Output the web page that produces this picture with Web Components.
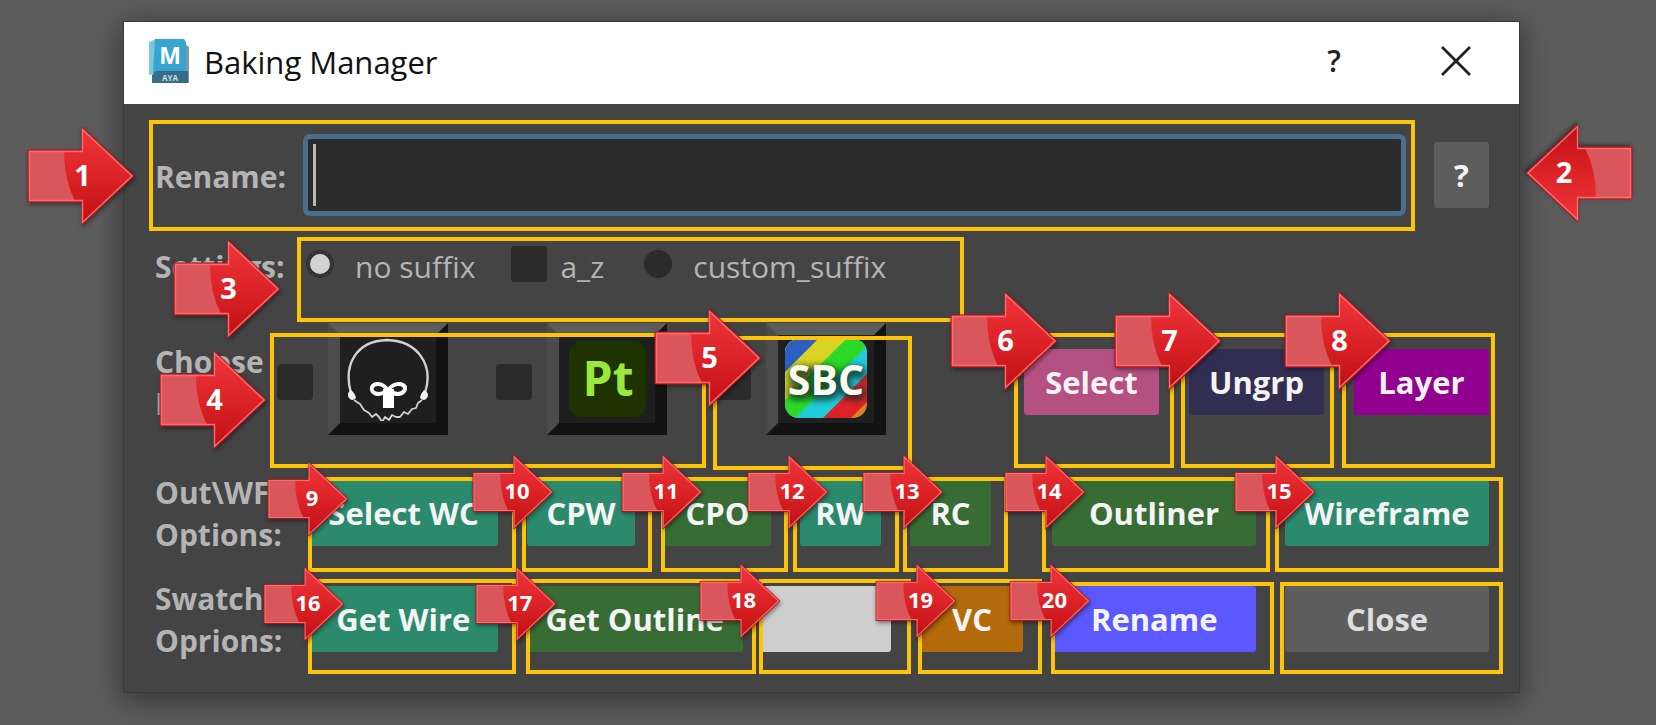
<!DOCTYPE html>
<html lang="en">
<head>
<meta charset="utf-8">
<title>Baking Manager</title>
<style>
  body { margin: 0; min-height: 100vh; background: #5c5c5c; font-family: "Open Sans", "Noto Sans", sans-serif; overflow-x: hidden; }
</style>
</head>
<body>
<baking-manager></baking-manager>

<script>
const define = (name, css, html, setup) => {
  const tpl = document.createElement('template');
  tpl.innerHTML = `<style>*{box-sizing:border-box}${css}</style>${html}`;
  customElements.define(name, class extends HTMLElement {
    connectedCallback() {
      if (this.shadowRoot) return;
      this.attachShadow({ mode: 'open' }).append(tpl.content.cloneNode(true));
      if (setup) setup(this, this.shadowRoot);
    }
  });
};

/* Red numbered arrow */
define('number-arrow', `
  :host { position: absolute; width: 106px; height: 98px; pointer-events: none; color: #fff; font-weight: 700; font-size: 29px; line-height: 96px; }
  :host([small]) { width: 80px; height: 74px; font-size: 22px; line-height: 71px; }
  svg { display: block; width: 100%; height: 100%; overflow: visible; filter: drop-shadow(1px 2px 2px rgba(0,0,0,.45)); }
  :host([back]) svg { transform: rotate(180deg); }
  span { position: absolute; inset: 0 0 0 3%; text-align: center; }
  :host([small]) span { left: 10%; }
  :host([back]) span { left: 0; right: 28%; }
`, `
  <svg viewBox="0 0 106 98" aria-hidden="true">
    <defs><linearGradient id="g" x1="0" y1="0" x2="0" y2="1"><stop offset="0" stop-color="#ee363b"/><stop offset=".5" stop-color="#dc2327"/><stop offset="1" stop-color="#bd0f12"/></linearGradient></defs>
    <path d="M0 23H54V0L106 49L54 98V75H0Z" fill="url(#g)" stroke="#a81c20" stroke-width="1"/>
    <path d="M1 24H36Q36 53 47 74H1Z" fill="#d9575b"/>
    <path d="M1.500 24.500H54.500V2.500L104 49L54.500 95.500V73.500H1.500Z" fill="none" stroke="#ff6a70" stroke-width="1.400"/>
  </svg><span><slot></slot></span>
`);

/* Content with a yellow frame around it and an optional arrow */
define('call-out', `
  :host { position: relative; display: flex; flex: none; }
  i { position: absolute; border: 4px solid #fcc40b; pointer-events: none; }
`, `<slot></slot><i hidden></i>`, (el, root) => {
  const frame = root.querySelector('i');
  const box = el.getAttribute('frame');
  if (box) { frame.hidden = false; frame.style.inset = box.split(' ').map(v => v + 'px').join(' '); } else frame.remove();
  if (el.hasAttribute('n')) {
    const arrow = document.createElement('number-arrow');
    const [x, y] = el.getAttribute('arrow').split(' ');
    arrow.style.left = x + 'px'; arrow.style.top = y + 'px';
    if (el.hasAttribute('small')) arrow.setAttribute('small', '');
    if (el.hasAttribute('back')) arrow.setAttribute('back', '');
    arrow.textContent = el.getAttribute('n');
    root.append(arrow);
  }
});

define('tool-button', `
  :host { display: flex; flex: 1; min-width: 0; }
  button { flex: 1; min-width: 0; height: 66px; padding: 0; border: 0; border-radius: 3px; background: var(--fill, #5d5d5d); color: var(--ink, #f4f4f4); font: 700 31px/42px "Open Sans", "Noto Sans", sans-serif; white-space: nowrap; }
`, `<button type="button"><slot></slot></button>`);

define('row-label', `
  :host { display: block; flex: none; width: 154px; padding-top: 2px; color: #b4b4b4; font-size: 30px; line-height: 42px; font-weight: 700; white-space: nowrap; }
`, `<slot></slot>`);

define('option-choice', `
  :host { display: flex; color: #b4b4b4; font-size: 30px; line-height: 42px; }
  label { display: flex; align-items: flex-start; white-space: nowrap; }
  input { appearance: none; margin: 0; background: #2b2b2b; flex: none; }
  input[type=checkbox] { width: 36px; height: 36px; border-radius: 4px; margin-right: 13px; }
  input[type=radio] { width: 28px; height: 28px; margin: 4px 21px 4px 3px; border-radius: 50%; }
  input[type=radio]:checked { border: 4px solid #343434; background: #d2d2d2; }
`, `<label><input><span><slot></slot></span></label>`, (el, root) => {
  const input = root.querySelector('input');
  input.type = el.getAttribute('type');
  input.name = 'suffix';
  input.checked = el.hasAttribute('checked');
});

/* Check box followed by a bevelled picture button */
define('app-choice', `
  :host { display: flex; align-items: center; gap: 15px; height: 118px; }
  input { appearance: none; margin: 0; width: 36px; height: 36px; border-radius: 4px; background: #2b2b2b; }
  button { align-self: flex-start; width: 120px; height: 112px; padding: 0; display: grid; place-items: center; background: #1f1f1f; border: 12px solid; border-color: #5c5c5c #121212 #121212 #4c4c4c; }
  ::slotted(svg) { display: block; width: 84px; height: 84px; }
`, `<input type="checkbox"><button type="button"><slot></slot></button>`, (el, root) => {
  root.querySelector('input').setAttribute('aria-label', 'Use ' + el.title);
  root.querySelector('button').setAttribute('aria-label', el.title);
});

define('title-bar', `
  :host { display: flex; align-items: center; height: 82px; padding: 0 48px 0 24px; background: #fff; color: #111; }
  svg { display: block; flex: none; }
  h1 { margin: 0 auto 0 14px; padding-bottom: 2px; font: 400 31px/42px "Open Sans", "Noto Sans", sans-serif; }
  button { border: 0; padding: 0; background: none; color: #222; font: 600 30px/42px "Open Sans", "Noto Sans", sans-serif; }
  .help { margin-right: 100px; padding-bottom: 4px; }
  .close { padding-bottom: 4px; }
`, `
  <svg width="42" height="48" viewBox="0 0 42 48" aria-hidden="true">
    <path d="M36 4L41 8V44H36Z" fill="#7f979f"/><path d="M1 3L8 0V34L1 36Z" fill="#7cc7e0"/>
    <path d="M7 0H36L38 3V34H5Z" fill="#37a5cf"/><path d="M4 36L8 32H40V44H4Z" fill="#366e85"/>
    <text x="22" y="25" text-anchor="middle" font-family="Open Sans" font-weight="700" font-size="23" fill="#fff">M</text>
    <text x="22" y="42" text-anchor="middle" font-family="Open Sans" font-weight="700" font-size="8" fill="#cfdde2">AYA</text>
  </svg>
  <h1><slot></slot></h1>
  <button class="help" type="button">?</button>
  <button class="close" type="button" aria-label="Close window"><svg width="30" height="30" viewBox="0 0 30 30"><path d="M1 1L29 29M29 1L1 29" stroke="#222" stroke-width="2.800" fill="none"/></svg></button>
`);

define('rename-field', `
  :host { display: flex; flex: 1; align-items: center; }
  label { flex: none; width: 148px; padding-top: 4px; color: #b4b4b4; font-size: 30px; line-height: 42px; font-weight: 700; }
  input { flex: 1; min-width: 0; height: 82px; margin: 0; padding: 0 16px; border: 5px solid #4b6f8a; border-radius: 7px; outline: 0; color: #ddd; font: 400 30px/42px "Open Sans", sans-serif;
    background: linear-gradient(#b9b9b9, #b9b9b9) 5px center / 3px 62px no-repeat #2b2b2b; }
`, `<label for="name">Rename:</label><input id="name" type="text">`);

define('baking-manager', `
  :host { display: block; padding: 21px 136px 32px 123px; }
  main { border: 1px solid #3a3a3a; background: #444; box-shadow: 0 6px 26px 2px rgba(0,0,0,.42); }
  form { display: flex; flex-direction: column; padding: 30px 30px 30px 31px; }
  .row { display: flex; align-items: center; }
  .options { align-items: flex-start; margin-top: 30px; }
  .options row-label { width: 148px; padding-top: 0; }
  .options call-out { padding-right: 72px; }
  .apps { min-height: 118px; margin-top: 35px; }
  .apps row-label { width: 122px; }
  .apps call-out { gap: 48px; }
  .apps call-out + call-out { margin-left: 48px; }
  .apps .act { width: 135px; }
  .apps call-out.act + .act { margin-left: 30px; }
  .apps call-out.first { margin-left: auto; }
  .wires { margin-top: 29px; }
  .swatches { margin-top: 20px; }
  .bar { display: flex; flex: 1; gap: 29px; }
  .bar call-out { flex: var(--w) 1 0; min-width: 0; }
  .bar .apart { margin-left: 32px; }
  .swatches .bar { gap: 17px; }
  .swatches call-out + call-out { margin-left: 12px; }
  .swatches call-out.swatch { margin-left: 0; }
  .help { width: 55px; margin-left: 28px; }
  .az { margin-left: 36px; }
  .cs { margin-left: 37px; }
  .teal { --fill: #2c8a6c; } .green { --fill: #386c35; }
`, `
<main>
  <title-bar>Baking Manager</title-bar>
  <form>
    <div class="row">
      <call-out style="flex:1" frame="-14 -9 -15 -6" n="1" arrow="-127 -7"><rename-field></rename-field></call-out>
      <call-out class="help" n="2" arrow="92 -18" back><tool-button>?</tool-button></call-out>
    </div>
    <div class="row options">
      <row-label>Settings:</row-label>
      <call-out frame="-9 -6 -34 -6" n="3" arrow="-129 -6">
        <option-choice type="radio" checked>no suffix</option-choice>
        <option-choice class="az" type="checkbox">a_z</option-choice>
        <option-choice class="cs" type="radio">custom_suffix</option-choice>
      </call-out>
    </div>
    <div class="row apps">
      <row-label>Choose<br>I</row-label>
      <call-out frame="10 -39 -27 -7" n="4" arrow="-117 28">
        <app-choice title="Marmoset">
          <svg viewBox="0 0 84 84" fill="none" stroke="#d2d2d2" stroke-width="2.400" stroke-linejoin="round">
            <path d="M5 56C-3 28 10 4 41 3C72 4 88 28 79 56"/>
            <path d="M8 63L14 67L18 73L23 76L26 80L30 77L33 80L36 85L39 80L43 83L46 78L50 80L54 80L58 75L62 77L66 72L70 71L72 66L76 63" stroke-width="1.800"/>
            <path d="M5 53Q0 56 3 61Q6 65 10 61Q9 56 5 53ZM78 53Q84 56 81 61Q78 65 74 61Q75 56 78 53Z" fill="#f2f2f2" stroke="none"/>
            <path d="M40 54C33 60 24 56 26 50C29 45 38 46 42 54C46 46 56 45 59 50C60 56 51 60 45 54" stroke="#fff" stroke-width="4"/>
            <path d="M37 52H48V71H37Z" fill="#fff" stroke="none"/>
          </svg>
        </app-choice>
        <app-choice title="Painter">
          <svg viewBox="0 0 84 84"><rect x="4" y="4" width="77" height="76" rx="13" fill="#1e3300"/><text x="43" y="59" text-anchor="middle" font-family="Open Sans" font-weight="700" font-size="48" fill="#9be83c">Pt</text></svg>
        </app-choice>
      </call-out>
      <call-out frame="13 -26 -29 -2" n="5" arrow="-60 -14">
        <app-choice title="SBC">
          <svg viewBox="0 0 84 84">
            <defs>
              <clipPath id="c"><rect x="1" y="2" width="82" height="79" rx="14"/></clipPath>
              <filter id="b" x="-20%" y="-30%" width="140%" height="160%"><feGaussianBlur stdDeviation="3"/></filter>
            </defs>
            <g clip-path="url(#c)">
              <path d="M0 0H84V84H0Z" fill="#d98222"/>
              <path d="M0 0H148L0 148Z" fill="#dc2228"/>
              <path d="M0 0H120L0 120Z" fill="#22cbd8"/>
              <path d="M0 0H92L0 92Z" fill="#2cda27"/>
              <path d="M0 0H64L0 64Z" fill="#d9d326"/>
              <path d="M0 0H36L0 36Z" fill="#2c5fc0"/>
              <text x="43" y="60" text-anchor="middle" font-family="Open Sans" font-weight="700" font-size="40" fill="#0a2a24" stroke="#0a2a24" stroke-width="7" opacity=".75" filter="url(#b)" aria-hidden="true">SBC</text>
            </g>
            <text x="42" y="58" text-anchor="middle" font-family="Open Sans" font-weight="700" font-size="41" fill="#fbfbf0">SBC</text>
          </svg>
        </app-choice>
      </call-out>
      <call-out class="act first" frame="-16 -15 -53 -10" n="6" arrow="-73 -57"><tool-button style="--fill:#b55182">Select</tool-button></call-out>
      <call-out class="act" frame="-16 -10 -53 -8" n="7" arrow="-74 -57"><tool-button style="--fill:#312e52">Ungrp</tool-button></call-out>
      <call-out class="act" frame="-16 -6 -53 -12" n="8" arrow="-69 -57"><tool-button style="--fill:#92008f">Layer</tool-button></call-out>
    </div>
    <div class="row wires">
      <row-label>Out\\WF<br>Options:</row-label>
      <div class="bar">
        <call-out small style="--w:189" frame="-3 -18 -26 -1" n="9" arrow="-41 -18"><tool-button class="teal">Select WC</tool-button></call-out>
        <call-out small style="--w:108" frame="-3 -17 -26 -5" n="10" arrow="-54 -25"><tool-button class="teal">CPW</tool-button></call-out>
        <call-out small style="--w:107" frame="-3 -17 -26 -3" n="11" arrow="-42 -25"><tool-button class="green">CPO</tool-button></call-out>
        <call-out small style="--w:81" frame="-3 -18 -26 -7" n="12" arrow="-52 -25"><tool-button class="teal">RW</tool-button></call-out>
        <call-out small style="--w:81" frame="-3 -17 -26 -7" n="13" arrow="-47 -25"><tool-button class="green">RC</tool-button></call-out>
        <call-out small class="apart" style="--w:204" frame="-3 -14 -26 -10" n="14" arrow="-47 -25"><tool-button class="green">Outliner</tool-button></call-out>
        <call-out small style="--w:204" frame="-3 -14 -26 -10" n="15" arrow="-50 -25"><tool-button class="teal">Wireframe</tool-button></call-out>
      </div>
    </div>
    <div class="row swatches">
      <row-label>Swatch<br>Oprions:</row-label>
      <div class="bar">
        <call-out small style="--w:189" frame="-7 -18 -22 -1" n="16" arrow="-45 -19"><tool-button class="teal">Get Wire</tool-button></call-out>
        <call-out small style="--w:216" frame="-7 -13 -22 -1" n="17" arrow="-51 -19"><tool-button class="green">Get Outline</tool-button></call-out>
        <call-out small class="swatch" style="--w:132" frame="-7 -20 -22 -1" n="18" arrow="-60 -22"><tool-button style="--fill:#cecece" aria-label="Colour swatch"></tool-button></call-out>
        <call-out small style="--w:103" frame="-7 -19 -22 -2" n="19" arrow="-44 -22"><tool-button style="--fill:#b36a0b">VC</tool-button></call-out>
        <call-out small style="--w:204" frame="-4 -18 -22 -1" n="20" arrow="-42 -22"><tool-button style="--fill:#5b58ff">Rename</tool-button></call-out>
        <call-out style="--w:204" frame="-4 -14 -22 -5"><tool-button style="--ink:#dedede">Close</tool-button></call-out>
      </div>
    </div>
  </form>
</main>
`);
</script>
</body>
</html>
